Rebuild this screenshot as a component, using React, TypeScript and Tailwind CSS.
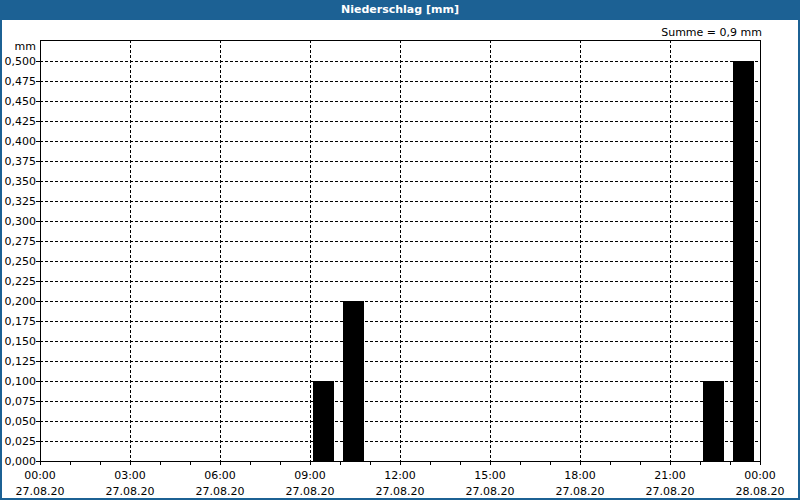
const W = 800;
const yLabels = Array.from({ length: 21 }, (_, i) => i * 0.025);
const xLabels = ['00:00', '03:00', '06:00', '09:00', '12:00', '15:00', '18:00', '21:00', '00:00'];
const bars = [
  { x: 313, v: 0.1 },
  { x: 343, v: 0.2 },
  { x: 703, v: 0.1 },
  { x: 733, v: 0.5 },
];
const y0 = 461;
const x0 = 40;
const x1 = 760;

export default function App() {
  return (
    <div className="w-[800px] h-[500px] bg-[#1c6194] flex flex-col" style={{ fontFamily: 'Tahoma, "DejaVu Sans", "Liberation Sans", sans-serif' }}>
      <div className="h-[20px] flex items-center justify-center text-white text-[11px] font-bold">Niederschlag [mm]</div>
      <div className="flex-1 mx-[2px] mb-[2px] bg-white">
        <svg width={796} height={478} viewBox="2 20 796 478" className="block" fontSize="11" fill="#000">
          <text x={762} y={36} textAnchor="end">Summe = 0,9 mm</text>
          <text x={36} y={50} textAnchor="end">mm</text>
          {yLabels.map((v, i) => {
            const y = y0 - i * 20;
            return (
              <g key={i}>
                {i > 0 && <line x1={x0} x2={x1} y1={y + 0.5} y2={y + 0.5} stroke="#000" strokeDasharray="3 2" />}
                <line x1={x0 - 4} x2={x0} y1={y + 0.5} y2={y + 0.5} stroke="#000" />
                <text x={36} y={y + 4} textAnchor="end">{v.toFixed(3).replace('.', ',')}</text>
              </g>
            );
          })}
          {Array.from({ length: 25 }, (_, i) => {
            const x = x0 + i * 30 + 0.5;
            const major = i % 3 === 0;
            return (
              <g key={i}>
                {major && i > 0 && i < 24 && <line x1={x} x2={x} y1={40} y2={y0} stroke="#000" strokeDasharray="3 2" />}
                <line x1={x} x2={x} y1={y0} y2={y0 + 4} stroke="#000" />
              </g>
            );
          })}
          {xLabels.map((l, i) => (
            <g key={i}>
              <text x={x0 + i * 90} y={479} textAnchor="middle">{l}</text>
              <text x={x0 + i * 90} y={495} textAnchor="middle">{i === 8 ? '28.08.20' : '27.08.20'}</text>
            </g>
          ))}
          {bars.map((b) => (
            <rect key={b.x} x={b.x} y={y0 - b.v * 800} width={21} height={b.v * 800} fill="#000" />
          ))}
          <rect x={x0 + 0.5} y={40.5} width={x1 - x0} height={y0 - 40} fill="none" stroke="#000" />
        </svg>
      </div>
    </div>
  );
}
